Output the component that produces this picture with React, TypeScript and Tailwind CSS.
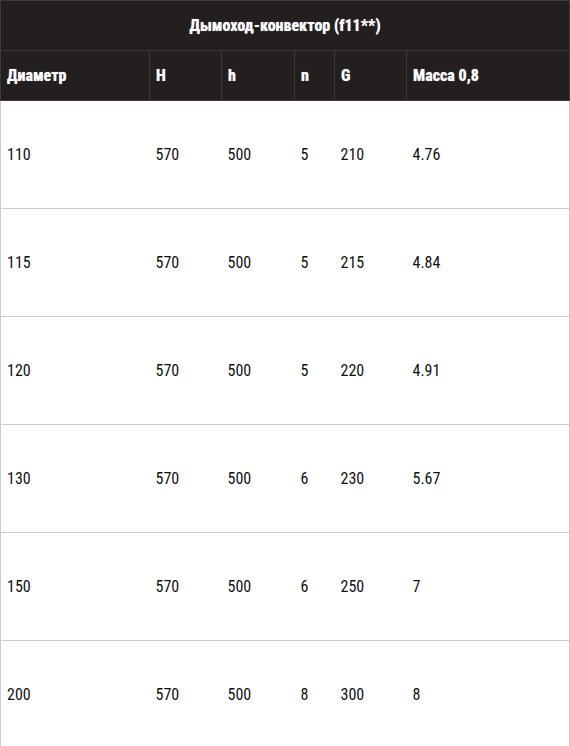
import React from "react";

const rows = [
  ["110", "570", "500", "5", "210", "4.76"],
  ["115", "570", "500", "5", "215", "4.84"],
  ["120", "570", "500", "5", "220", "4.91"],
  ["130", "570", "500", "6", "230", "5.67"],
  ["150", "570", "500", "6", "250", "7"],
  ["200", "570", "500", "8", "300", "8"],
];

const heads = ["Диаметр", "H", "h", "n", "G", "Масса 0,8"];

export default function App() {
  return (
    <div
      className="w-[570px] bg-white"
      style={{ fontFamily: "Roboto, 'Liberation Sans', sans-serif", fontStretch: "condensed" }}
    >
      <table className="w-[570px] table-fixed border-collapse border border-[#cccccc]">
        <colgroup>
          <col className="w-[149px]" />
          <col className="w-[72px]" />
          <col className="w-[73px]" />
          <col className="w-[40px]" />
          <col className="w-[72px]" />
          <col />
        </colgroup>
        <thead>
          <tr className="h-[50px] bg-[#221f1e]">
            <th
              colSpan={6}
              className="border border-[#3d3a39] text-center text-[16px] font-extrabold text-white [text-shadow:0_0_1px_rgba(255,255,255,0.6)]"
            >
              Дымоход-конвектор (f11**)
            </th>
          </tr>
          <tr className="h-[50px] bg-[#221f1e]">
            {heads.map((h) => (
              <th
                key={h}
                className="border border-[#3d3a39] px-[6px] text-left text-[16px] font-extrabold text-white [text-shadow:0_0_1px_rgba(255,255,255,0.6)]"
              >
                {h}
              </th>
            ))}
          </tr>
        </thead>
        <tbody>
          {rows.map((r, i) => (
            <tr key={i} className="h-[108px] border-t border-[#cccccc]">
              {r.map((c, j) => (
                <td key={j} className="px-[6px] text-left text-[16px] text-[#111111]">
                  {c}
                </td>
              ))}
            </tr>
          ))}
        </tbody>
      </table>
    </div>
  );
}
